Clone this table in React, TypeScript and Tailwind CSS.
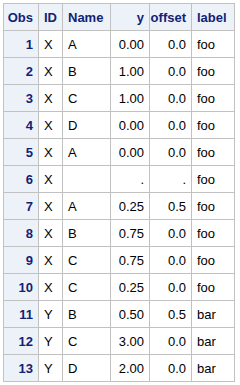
import React from "react";

const rows: [string, string, string, string, string, string][] = [
  ["1", "X", "A", "0.00", "0.0", "foo"],
  ["2", "X", "B", "1.00", "0.0", "foo"],
  ["3", "X", "C", "1.00", "0.0", "foo"],
  ["4", "X", "D", "0.00", "0.0", "foo"],
  ["5", "X", "A", "0.00", "0.0", "foo"],
  ["6", "X", "", ".", ".", "foo"],
  ["7", "X", "A", "0.25", "0.5", "foo"],
  ["8", "X", "B", "0.75", "0.0", "foo"],
  ["9", "X", "C", "0.75", "0.0", "foo"],
  ["10", "X", "C", "0.25", "0.0", "foo"],
  ["11", "Y", "B", "0.50", "0.5", "bar"],
  ["12", "Y", "C", "3.00", "0.0", "bar"],
  ["13", "Y", "D", "2.00", "0.0", "bar"],
];

const head = "flex items-center bg-[#edf2f9] text-[#112277] font-bold px-[5px]";
const cell = "flex items-center bg-white text-black px-[5px]";

export default function App() {
  return (
    <div className="bg-white w-[240px] h-[385px] pt-[3px] pl-[3px]" style={{ fontFamily: '"Liberation Sans", Arial, sans-serif' }}>
      <div className="inline-grid grid-cols-[34px_23px_47px_38px_41px_42px] auto-rows-[26px] gap-px p-px bg-[#c1c1c1] text-[13px] leading-none">
        <div className={head + " justify-end"}>Obs</div>
        <div className={head}>ID</div>
        <div className={head}>Name</div>
        <div className={head + " justify-end"}>y</div>
        <div className={head + " justify-end"}>offset</div>
        <div className={head}>label</div>
        {rows.map((r) => (
          <React.Fragment key={r[0]}>
            <div className={head + " justify-end"}>{r[0]}</div>
            <div className={cell}>{r[1]}</div>
            <div className={cell}>{r[2]}</div>
            <div className={cell + " justify-end"}>{r[3]}</div>
            <div className={cell + " justify-end"}>{r[4]}</div>
            <div className={cell}>{r[5]}</div>
          </React.Fragment>
        ))}
      </div>
    </div>
  );
}
